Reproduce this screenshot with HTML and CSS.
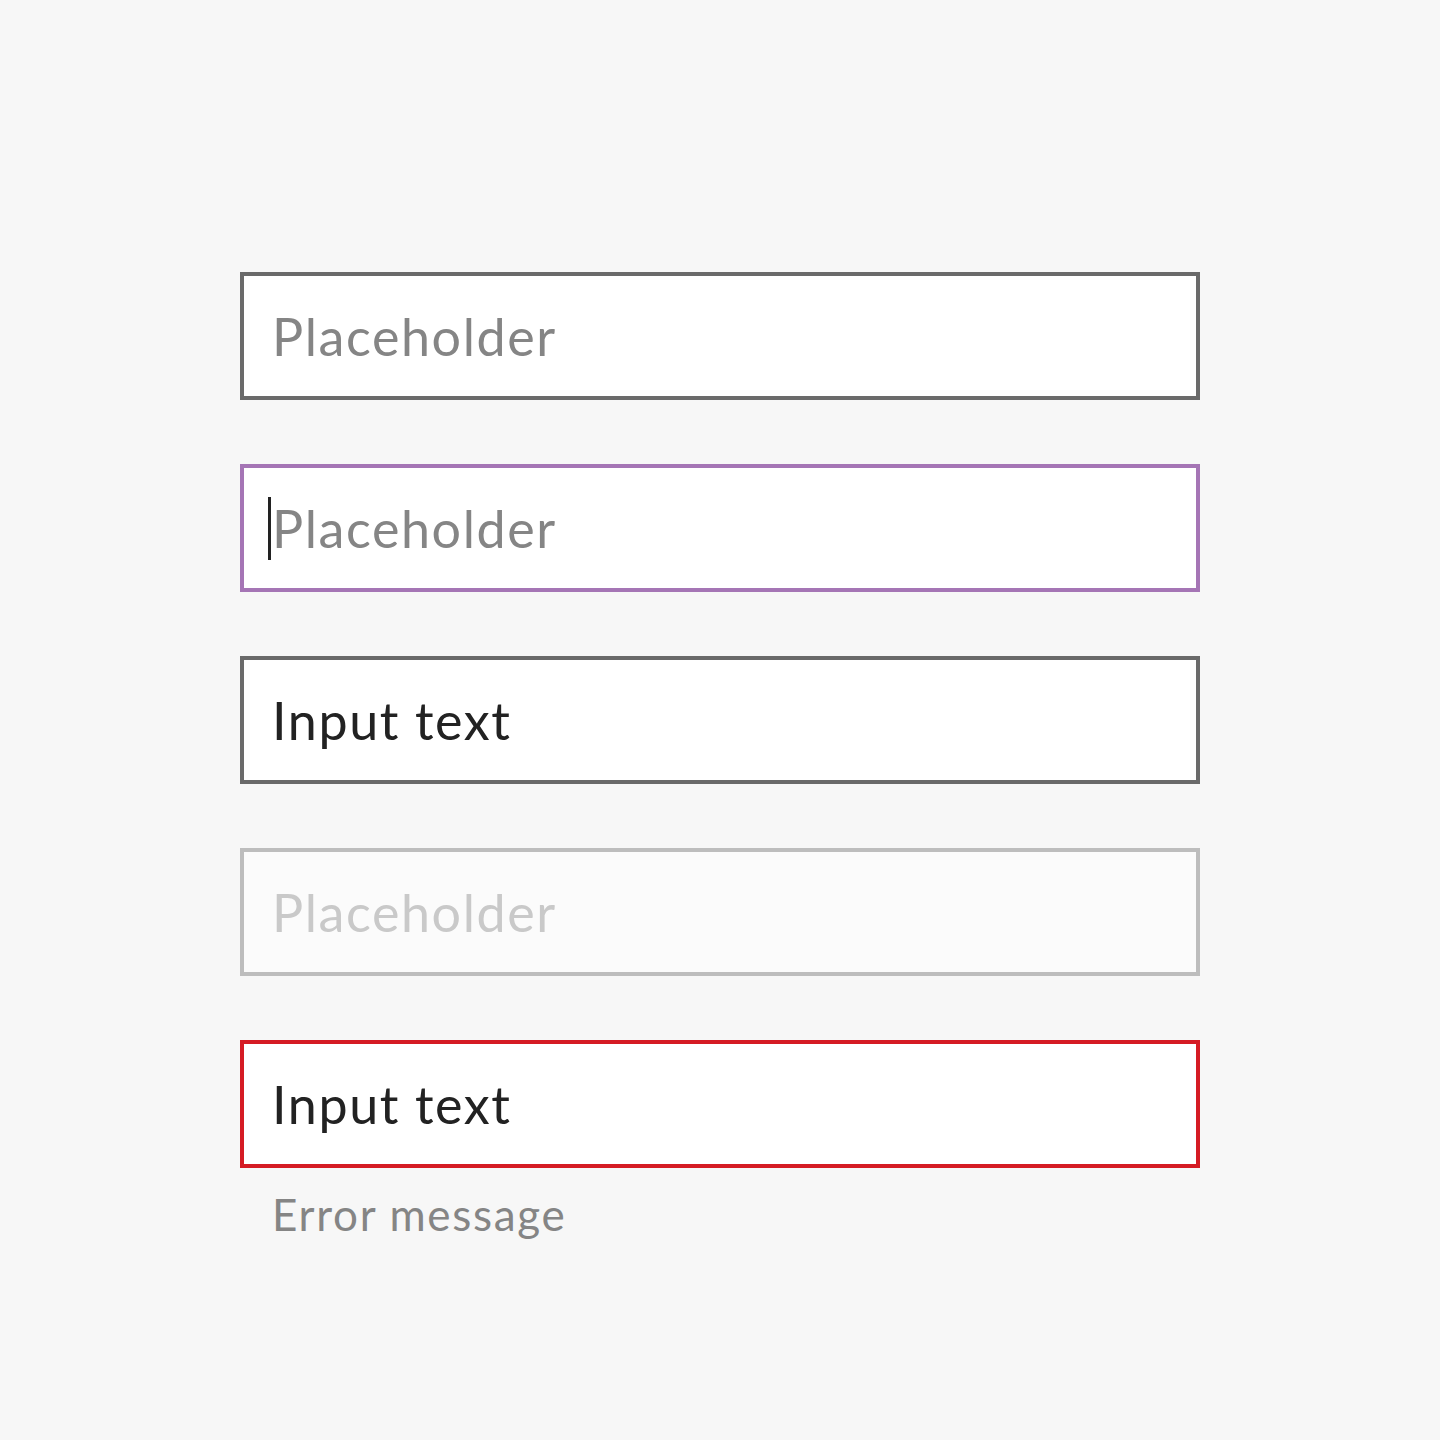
FILE: index.html
```html
<!DOCTYPE html>
<html lang="en">
<head>
<meta charset="utf-8">
<title>Text fields</title>
<link rel="stylesheet" href="styles.css">
</head>
<body>
<main class="stack">
  <div class="field">
    <div class="box"><span class="placeholder">Placeholder</span></div>
  </div>
  <div class="field">
    <div class="box box-focus"><span class="caret"></span><span class="placeholder">Placeholder</span></div>
  </div>
  <div class="field">
    <div class="box"><span class="value">Input text</span></div>
  </div>
  <div class="field">
    <div class="box box-disabled"><span class="placeholder placeholder-disabled">Placeholder</span></div>
  </div>
  <div class="field">
    <div class="box box-error"><span class="value">Input text</span></div>
    <div class="error-msg">Error message</div>
  </div>
</main>
</body>
</html>
```
FILE: styles.css
```css
html, body {
  margin: 0;
  padding: 0;
  background: #f7f7f7;
}
body {
  font-family: "Lato", "Open Sans", sans-serif;
  width: 1440px;
  height: 1440px;
}
.stack {
  display: flex;
  flex-direction: column;
  gap: 64px;
  padding: 272px 240px 0 240px;
}
.field {
  display: flex;
  flex-direction: column;
}
.box {
  box-sizing: border-box;
  height: 128px;
  width: 960px;
  border: 4px solid #6a6a6a;
  background: #ffffff;
  display: flex;
  align-items: center;
  padding-left: 28px;
  position: relative;
  font-size: 52px;
  line-height: 1;
  letter-spacing: 1.6px;
}
.box-focus { border-color: #a575b5; }
.box-disabled { border-color: #bdbdbd; background: #fbfbfb; }
.box-error { border-color: #d51b24; }
.placeholder { color: #858585; }
.placeholder-disabled { color: #c9c9c9; }
.value { color: #222222; }
.caret {
  position: absolute;
  left: 24px;
  top: 29px;
  width: 3px;
  height: 63px;
  background: #222222;
}
.error-msg {
  margin-top: 20px;
  padding-left: 32px;
  font-size: 44px;
  line-height: 52px;
  letter-spacing: 1.7px;
  color: #858585;
}
```
